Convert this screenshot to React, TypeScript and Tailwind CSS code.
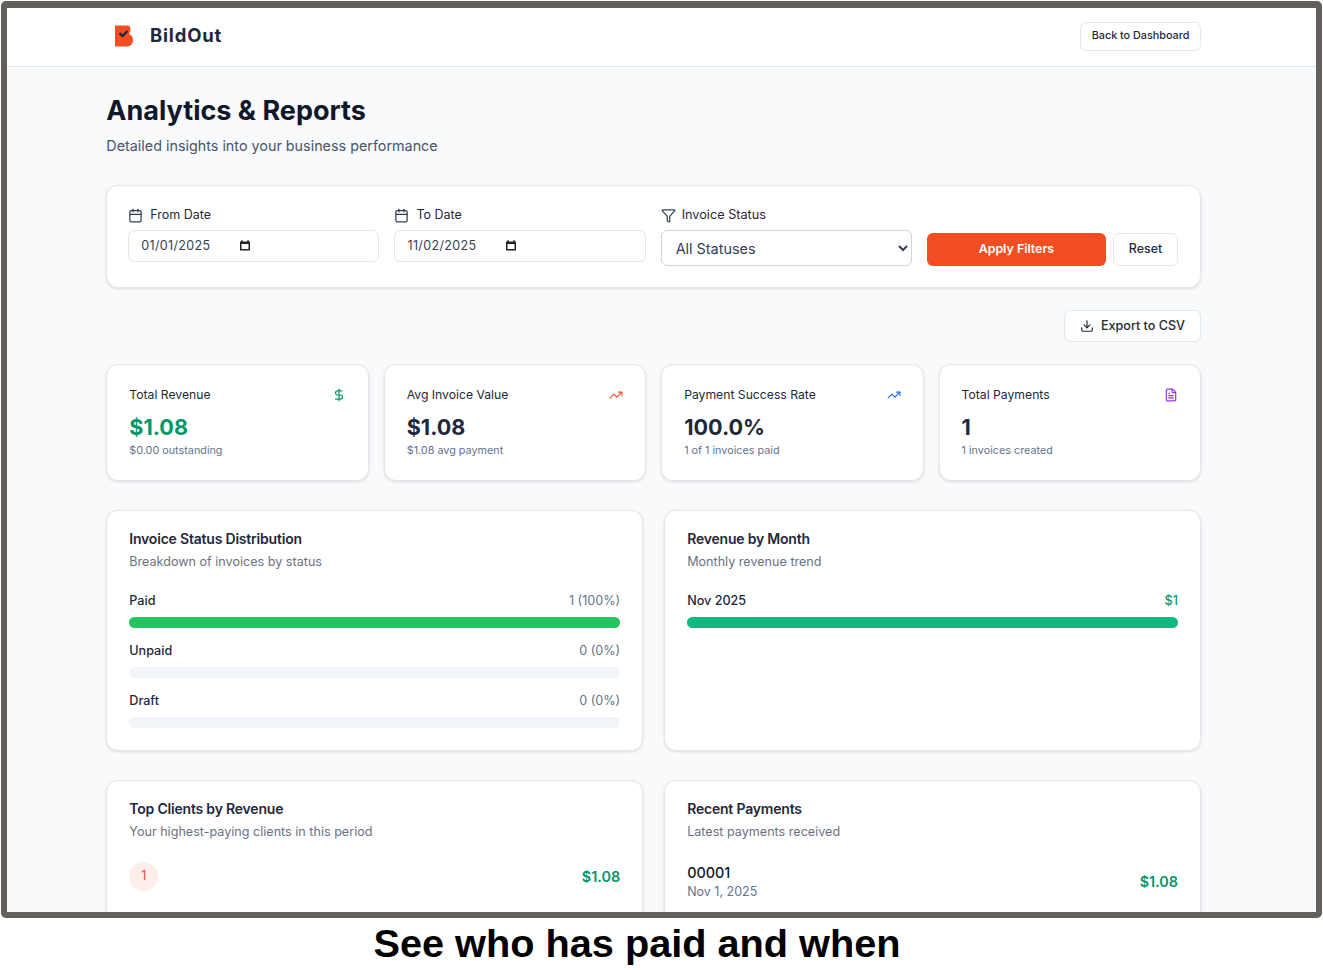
import { Calendar, Download, DollarSign, FileText, Funnel, TrendingUp } from 'lucide-react'
import type { ReactNode } from 'react'

function Logo() {
  return (
    <svg width="20" height="22" viewBox="0 0 20 22" className="block">
      <path
        d="M1 0.5H13.5C15.5 0.5 16.5 2 16.5 4C16.5 6 16 7.5 15 9C17.5 10 19 12 19 15C19 19 16.5 21.5 12.5 21.5H1Z"
        fill="#f34e22"
      />
      <path d="M5.5 8L8.5 11L13.5 6" fill="none" stroke="#1f2937" strokeWidth="2.4" />
    </svg>
  )
}

function DateField({ label, value }: { label: string; value: string }) {
  return (
    <div>
      <label className="flex items-center gap-[7px] h-[16px] mb-[7px] text-[12.5px] text-[#1e293b]">
        <Calendar size={15} className="text-[#334155]" />
        {label}
      </label>
      <div className="h-[32px] flex items-center gap-[27px] pl-[12px] rounded-md border border-[#e2e8f0] bg-white text-[12.5px] tracking-[0.35px] text-[#334155]">
        <span className="w-[71px]">{value}</span>
        <svg width="12" height="12" viewBox="0 0 12 12" className="-mt-[2px]">
          <path d="M1 2.5H11V11.5H1Z M2.5 5V10H9.5V5Z" fill="#222" fillRule="evenodd" />
          <path d="M3 1V3M9 1V3" stroke="#222" strokeWidth="1.2" />
        </svg>
      </div>
    </div>
  )
}

function StatCard({
  title,
  value,
  note,
  icon,
  valueColor = 'text-[#1e293b]',
}: {
  title: string
  value: string
  note: string
  icon: ReactNode
  valueColor?: string
}) {
  return (
    <div className="h-[117px] rounded-xl border border-[#e5e7eb] bg-white shadow-[0_1px_3px_rgba(0,0,0,0.12)] px-[22px] pt-[21px]">
      <div className="flex items-center justify-between h-[18px]">
        <span className="text-[12.2px] text-[#1e293b]">{title}</span>
        {icon}
      </div>
      <div className={`mt-[6.5px] text-[21.6px] leading-[32px] font-bold ${valueColor}`}>{value}</div>
      <div className="mt-[0.5px] text-[10.8px] leading-[16px] text-[#64748b]">{note}</div>
    </div>
  )
}

function Panel({ title, subtitle, height, children }: { title: string; subtitle: string; height?: string; children: ReactNode }) {
  return (
    <div className={`rounded-xl border border-[#e5e7eb] bg-white shadow-[0_1px_3px_rgba(0,0,0,0.12)] px-[22px] pt-[19px] ${height ?? ''}`}>
      <h3 className="text-[14px] leading-[18px] font-semibold tracking-[-0.2px] text-[#1e293b]">{title}</h3>
      <p className="mt-[5px] text-[12.6px] leading-[17px] text-[#6b7280]">{subtitle}</p>
      {children}
    </div>
  )
}

function StatusBar({ label, value, fill, color, valueColor }: { label: string; value: string; fill: boolean; color: string; valueColor: string }) {
  return (
    <div className="h-[50px]">
      <div className="flex items-center justify-between h-[18px] text-[12.6px]">
        <span className="font-medium text-[#1e293b]">{label}</span>
        <span className={valueColor}>{value}</span>
      </div>
      <div className="mt-[7px] h-[11px] rounded-full bg-[#f1f5f9]">
        {fill && <div className={`h-full rounded-full ${color}`} />}
      </div>
    </div>
  )
}

export default function App() {
  return (
    <div className="font-['Inter',sans-serif] bg-white h-[970px] overflow-hidden">
      <div className="mx-px mt-px h-[917px] w-[1321px] overflow-hidden rounded-[5px] border-x-[6px] border-t-[7px] border-b-[6px] border-[#645f5c] bg-[#f8fafc]">
        <header className="h-[59px] border-b border-[#e2e8f0] bg-white flex items-center justify-between pl-[107px] pr-[115px] pb-[2px]">
          <div className="flex items-center gap-[16px]">
            <Logo />
            <span className="text-[18.5px] font-bold tracking-[0.8px] text-[#1e293b]">BildOut</span>
          </div>
          <button className="h-[29px] w-[121px] rounded-md border border-[#e2e8f0] bg-white text-[10.8px] font-medium text-[#1e293b]">
            Back to Dashboard
          </button>
        </header>

        <main className="ml-[99.3px] w-[1094.7px]">
          <h1 className="mt-[26px] text-[27px] leading-[36px] font-bold text-[#0f172a]">Analytics &amp; Reports</h1>
          <p className="mt-[6px] text-[14.35px] leading-[22px] text-[#475569]">Detailed insights into your business performance</p>

          <section className="mt-[28px] h-[103px] rounded-xl border border-[#e5e7eb] bg-white shadow-[0_1px_3px_rgba(0,0,0,0.12)] pl-[21px] pr-[22px] pt-[21px] grid grid-cols-4 gap-[15px]">
            <DateField label="From Date" value="01/01/2025" />
            <DateField label="To Date" value="11/02/2025" />
            <div>
              <label className="flex items-center gap-[6px] h-[16px] mb-[7px] text-[12.7px] text-[#1e293b]">
                <Funnel size={15} className="text-[#334155]" />
                Invoice Status
              </label>
              <select className="w-full h-[36px] pl-[10px] pr-[2px] rounded-md border border-[#cbd5e1] bg-white text-[14.4px] text-[#334155]">
                <option>All Statuses</option>
              </select>
            </div>
            <div className="flex gap-[7px] pt-[3px] mt-[23px]">
              <button className="flex-1 h-[33px] rounded-md bg-[#f34e22] text-[12.4px] font-semibold text-white">Apply Filters</button>
              <button className="w-[65px] h-[33px] rounded-md border border-[#e2e8f0] bg-white text-[12.4px] font-medium text-[#1e293b]">Reset</button>
            </div>
          </section>

          <div className="mt-[22px] flex justify-end">
            <button className="h-[32px] w-[137px] flex items-center justify-center gap-[7px] rounded-md border border-[#e2e8f0] bg-white text-[12.6px] font-medium text-[#1e293b]">
              <Download size={14} />
              Export to CSV
            </button>
          </div>

          <div className="mt-[22px] grid grid-cols-4 gap-[15px]">
            <StatCard
              title="Total Revenue"
              value="$1.08"
              note="$0.00 outstanding"
              valueColor="text-[#059669]"
              icon={<DollarSign size={14} className="text-[#059669]" />}
            />
            <StatCard title="Avg Invoice Value" value="$1.08" note="$1.08 avg payment" icon={<TrendingUp size={14} className="text-[#f34e22]" />} />
            <StatCard title="Payment Success Rate" value="100.0%" note="1 of 1 invoices paid" icon={<TrendingUp size={14} className="text-[#2563eb]" />} />
            <StatCard title="Total Payments" value="1" note="1 invoices created" icon={<FileText size={14} className="text-[#9333ea]" />} />
          </div>

          <div className="mt-[29px] grid grid-cols-2 gap-[21px]">
            <Panel title="Invoice Status Distribution" subtitle="Breakdown of invoices by status" height="h-[241px]">
              <div className="mt-[22px]">
                <StatusBar label="Paid" value="1 (100%)" fill color="bg-[#22c55e]" valueColor="text-[#64748b]" />
                <StatusBar label="Unpaid" value="0 (0%)" fill={false} color="" valueColor="text-[#64748b]" />
                <StatusBar label="Draft" value="0 (0%)" fill={false} color="" valueColor="text-[#64748b]" />
              </div>
            </Panel>
            <Panel title="Revenue by Month" subtitle="Monthly revenue trend" height="h-[241px]">
              <div className="mt-[22px]">
                <StatusBar label="Nov 2025" value="$1" fill color="bg-[#10b981]" valueColor="text-[#059669] font-medium" />
              </div>
            </Panel>
          </div>

          <div className="mt-[29px] grid grid-cols-2 gap-[21px]">
            <Panel title="Top Clients by Revenue" subtitle="Your highest-paying clients in this period" height="h-[200px]">
              <div className="mt-[22px] flex items-center justify-between">
                <div className="w-[29px] h-[29px] rounded-full bg-[#fdeeea] flex items-center justify-center text-[12.5px] text-[#ef4444]">1</div>
                <span className="text-[14.4px] font-semibold text-[#059669]">$1.08</span>
              </div>
            </Panel>
            <Panel title="Recent Payments" subtitle="Latest payments received" height="h-[200px]">
              <div className="mt-[23px] flex items-center justify-between">
                <div>
                  <div className="text-[14.4px] leading-[20px] font-medium text-[#0f172a]">00001</div>
                  <div className="text-[12.5px] leading-[18px] text-[#64748b]">Nov 1, 2025</div>
                </div>
                <span className="text-[14.4px] font-semibold text-[#059669]">$1.08</span>
              </div>
            </Panel>
          </div>
        </main>
      </div>
      <div className="w-[1274px] text-center font-['Liberation_Sans',Arial,sans-serif] font-bold text-[39.7px] leading-[50px] text-black">
        See who has paid and when
      </div>
    </div>
  )
}
